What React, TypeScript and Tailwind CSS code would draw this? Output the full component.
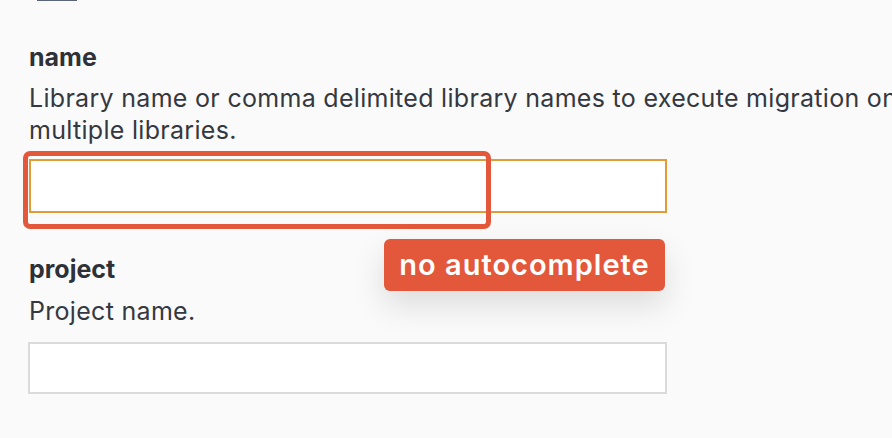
export default function App() {
  return (
    <div className="relative w-[892px] h-[438px] overflow-hidden bg-[#fafafa] font-['Inter',sans-serif] text-[#35383f]">
      <div className="ml-[37px] h-px w-10 bg-[#5b6579]" />

      <div className="pl-[29px] pt-[41px]">
        {/* name field */}
        <label className="block text-[25px] leading-[30px] font-bold text-[#2e3138]">name</label>
        <p className="mt-[10px] w-[900px] text-[25px] leading-[32px] tracking-[0.3px]">
          Library name or comma delimited library names to execute migration on multiple libraries.
        </p>
        <div className="relative mt-[13px] w-[638px]">
          <input className="block h-[54px] w-full border-2 border-[#df9c38] bg-white outline-none" />
          <div className="pointer-events-none absolute -left-[6px] -top-[8px] h-[78px] w-[468px] rounded-[7px] border-[5px] border-[#e3573a]" />
          <div className="absolute left-[355px] top-[80px] flex h-[52px] w-[281px] items-center justify-center rounded-md bg-[#e3573a] text-[29px] font-semibold tracking-[1px] text-white shadow-[0_14px_32px_rgba(0,0,0,0.12)]">
            no autocomplete
          </div>
        </div>

        {/* project field */}
        <label className="mt-[41px] block text-[25px] leading-[30px] font-bold text-[#2e3138]">project</label>
        <p className="mt-[11px] text-[25px] leading-[32px] tracking-[0.3px]">Project name.</p>
        <input className="mt-[15px] block h-[52px] w-[639px] -ml-px border-2 border-[#dadada] bg-white outline-none" />
      </div>
    </div>
  )
}
